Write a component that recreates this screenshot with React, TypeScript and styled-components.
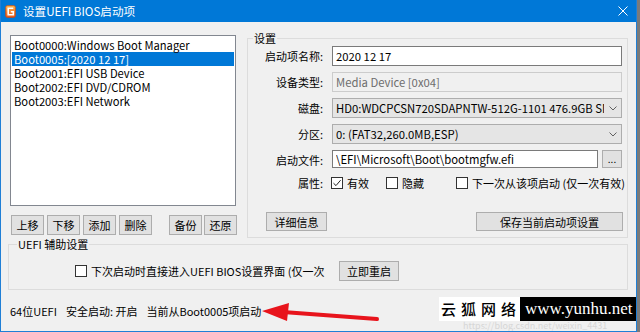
import React from 'react';
import styled, { createGlobalStyle } from 'styled-components';

const Global = createGlobalStyle`
  html, body { margin: 0; padding: 0; background: #7a7a7a; }
  body {
    font-family: "Noto Sans CJK SC", "Noto Sans", sans-serif;
    font-size: 11px;
    color: #000;
  }
  * { box-sizing: border-box; }
`;

const Window = styled.div`
  position: relative;
  width: 637px;
  height: 332px;
  background: #f0f0f0;
  border: 1px solid #1f7fd6;
  border-top: none;
  display: flex;
  flex-direction: column;
  overflow: hidden;
`;

const TitleBar = styled.div`
  height: 22px;
  flex: none;
  background: #0078d7;
  color: #fff;
  display: flex;
  align-items: center;
  padding-left: 4px;
  gap: 7px;
  font-size: 11.6px;
  line-height: 22px;
`;

const TitleText = styled.span`
  flex: 1;
`;

const CloseBtn = styled.div`
  width: 26px;
  height: 22px;
  display: flex;
  align-items: center;
  justify-content: center;
`;

const Content = styled.div`
  flex: 1;
  display: flex;
  flex-direction: column;
  padding: 13px 0 0 7px;
`;

const TopRow = styled.div`
  display: flex;
  padding-left: 2px;
  gap: 11px;
`;

const LeftCol = styled.div`
  width: 226px;
  display: flex;
  flex-direction: column;
  gap: 9px;
`;

const ListBox = styled.div`
  height: 171px;
  background: #fff;
  border: 1px solid #828790;
  padding: 2px 1px;
`;

const ListItem = styled.div<{ $sel?: boolean }>`
  height: 14px;
  line-height: 14px;
  padding-left: 2px;
  font-size: 11.2px;
  white-space: nowrap;
  background: ${p => (p.$sel ? '#0078d7' : 'transparent')};
  color: ${p => (p.$sel ? '#fff' : '#000')};
`;

const BtnRow = styled.div`
  display: flex;
  padding-left: 1px;
`;

const Btn = styled.button<{ $w?: number; $h?: number; $ml?: number }>`
  width: ${p => p.$w ?? 33}px;
  height: ${p => p.$h ?? 20}px;
  margin-left: ${p => p.$ml ?? 0}px;
  padding: 0;
  background: #e1e1e1;
  border: 1px solid #adadad;
  font-family: inherit;
  font-size: 11px;
  line-height: 16px;
  color: #000;
  flex: none;
`;

const Group = styled.div<{ $w: number; $h: number; $mt?: number }>`
  position: relative;
  width: ${p => p.$w}px;
  height: ${p => p.$h}px;
  margin-top: ${p => p.$mt ?? 0}px;
  border: 1px solid #dcdcdc;
  flex: none;
`;

const Legend = styled.span<{ $left: number }>`
  position: absolute;
  top: -8px;
  left: ${p => p.$left}px;
  padding: 0 1px;
  background: #f0f0f0;
  line-height: 14px;
  white-space: nowrap;
`;

const Form = styled.div`
  display: grid;
  grid-template-columns: 75px 290px;
  column-gap: 9px;
  row-gap: 6px;
  grid-auto-rows: 20px;
  padding-top: 7px;
`;

const Label = styled.div<{ $w?: number }>`
  text-align: right;
  line-height: 20px;
  white-space: nowrap;
  flex: none;
  width: ${p => (p.$w ? `${p.$w}px` : 'auto')};
`;

const Field = styled.div<{ $kind: 'edit' | 'disabled' | 'combo'; $h?: number }>`
  height: ${p => p.$h ?? 20}px;
  flex: 1;
  border: 1px solid
    ${p => (p.$kind === 'edit' ? '#7a7a7a' : p.$kind === 'disabled' ? '#cccccc' : '#adadad')};
  background: ${p => (p.$kind === 'edit' ? '#fff' : p.$kind === 'disabled' ? '#f0f0f0' : '#e5e5e5')};
  color: ${p => (p.$kind === 'disabled' ? '#6d6d6d' : '#000')};
  padding-left: 3px;
  font-size: 11.3px;
  white-space: nowrap;
  overflow: hidden;
  display: flex;
  align-items: center;
`;

const FieldText = styled.span`
  flex: 1;
  overflow: hidden;
  white-space: nowrap;
`;

const Chevron = styled.span`
  width: 17px;
  flex: none;
  display: flex;
  justify-content: center;
  align-items: center;
`;

const FileRow = styled.div`
  display: flex;
  gap: 4px;
  height: 18px;
`;

const DotBtn = styled.button`
  width: 20px;
  height: 18px;
  padding: 0;
  background: #e1e1e1;
  border: 1px solid #adadad;
  font-family: inherit;
  font-size: 10px;
  line-height: 12px;
  flex: none;
`;

const AttrRow = styled.div`
  display: flex;
  align-items: center;
  height: 14px;
  margin-top: 6px;
`;

const Check = styled.label<{ $ml?: number; $w?: number }>`
  display: flex;
  align-items: center;
  gap: 4px;
  margin-left: ${p => p.$ml ?? 0}px;
  width: ${p => (p.$w ? `${p.$w}px` : 'auto')};
  white-space: nowrap;
  line-height: 14px;
  flex: none;
`;

const Box = styled.span`
  width: 12px;
  height: 12px;
  border: 1px solid #333;
  background: #fff;
  display: inline-flex;
  align-items: center;
  justify-content: center;
  flex: none;
`;

const ActionRow = styled.div`
  display: flex;
  justify-content: space-between;
  padding: 0 4px 0 18px;
  margin-top: 22px;
`;

const UefiRow = styled.div`
  display: flex;
  align-items: center;
  padding: 16px 0 0 66px;
`;

const StatusBar = styled.div`
  display: flex;
  align-items: center;
  padding-left: 2px;
  margin-top: 13px;
  height: 16px;
  line-height: 16px;
  white-space: nowrap;
`;

const StatusItem = styled.span<{ $ml?: number }>`
  margin-left: ${p => p.$ml ?? 0}px;
`;

const Arrow = styled.svg`
  position: absolute;
  left: 258px;
  top: 300px;
`;

const Watermark = styled.div`
  position: absolute;
  left: 438px;
  top: 297px;
  display: flex;
  height: 24px;
`;

const WmLeft = styled.div`
  width: 81px;
  background: #fff;
  color: #000;
  font-size: 15px;
  font-weight: 500;
  line-height: 24px;
  padding-left: 2px;
  letter-spacing: 5px;
  white-space: nowrap;
  overflow: hidden;
`;

const WmRight = styled.div`
  width: 118px;
  background: #000;
  color: #fff;
  font-size: 17px;
  line-height: 24px;
  padding-left: 5px;
  white-space: nowrap;
  font-family: "Liberation Serif", "DejaVu Serif", serif;
`;

const FaintUrl = styled.div`
  position: absolute;
  left: 462px;
  top: 321px;
  font-size: 9px;
  line-height: 10px;
  color: #d6d6d6;
  white-space: nowrap;
`;

const CheckMark = () => (
  <svg width="10" height="10" viewBox="0 0 10 10">
    <path d="M1.5 5.2 L4 7.6 L8.6 2.2" fill="none" stroke="#222" strokeWidth="1" />
  </svg>
);

const ChevronIcon = () => (
  <svg width="8" height="5" viewBox="0 0 8 5">
    <path d="M0.5 0.5 L4 4 L7.5 0.5" fill="none" stroke="#606060" strokeWidth="1" />
  </svg>
);

const AppIcon = () => (
  <svg width="11" height="13" viewBox="0 0 11 13">
    <defs>
      <linearGradient id="ig" x1="0" y1="0" x2="0" y2="1">
        <stop offset="0" stopColor="#ffb347" />
        <stop offset="1" stopColor="#e8561c" />
      </linearGradient>
    </defs>
    <rect x="0.5" y="0.5" width="10" height="12" rx="2" fill="url(#ig)" stroke="#c9440f" strokeWidth="0.6" />
    <path d="M8.3 3.3 H3.2 V9.7 H8.3 V6.8 H5.8" fill="none" stroke="#fff" strokeWidth="1.6" />
  </svg>
);

const CloseIcon = () => (
  <svg width="10" height="10" viewBox="0 0 10 10">
    <path d="M0.5 0.5 L9.5 9.5 M9.5 0.5 L0.5 9.5" stroke="#fff" strokeWidth="1" />
  </svg>
);

const items = [
  'Boot0000:Windows Boot Manager',
  'Boot0005:[2020 12 17]',
  'Boot2001:EFI USB Device',
  'Boot2002:EFI DVD/CDROM',
  'Boot2003:EFI Network',
];

export default function App() {
  return (
    <>
      <Global />
      <Window>
        <TitleBar>
          <AppIcon />
          <TitleText>设置UEFI BIOS启动项</TitleText>
          <CloseBtn>
            <CloseIcon />
          </CloseBtn>
        </TitleBar>
        <Content>
          <TopRow>
            <LeftCol>
              <ListBox>
                {items.map((t, i) => (
                  <ListItem key={t} $sel={i === 1}>
                    {t}
                  </ListItem>
                ))}
              </ListBox>
              <BtnRow>
                <Btn>上移</Btn>
                <Btn $ml={3}>下移</Btn>
                <Btn $ml={3}>添加</Btn>
                <Btn $ml={3}>删除</Btn>
                <Btn $ml={17}>备份</Btn>
                <Btn $ml={2}>还原</Btn>
              </BtnRow>
            </LeftCol>
            <Group $w={381} $h={200} $mt={3}>
              <Legend $left={5}>设置</Legend>
              <Form>
                <Label>启动项名称:</Label>
                <Field $kind="edit">
                  <FieldText>2020 12 17</FieldText>
                </Field>
                <Label>设备类型:</Label>
                <Field $kind="disabled">
                  <FieldText>Media Device [0x04]</FieldText>
                </Field>
                <Label>磁盘:</Label>
                <Field $kind="combo">
                  <FieldText>HD0:WDCPCSN720SDAPNTW-512G-1101 476.9GB SN</FieldText>
                  <Chevron>
                    <ChevronIcon />
                  </Chevron>
                </Field>
                <Label>分区:</Label>
                <Field $kind="combo">
                  <FieldText>0: (FAT32,260.0MB,ESP)</FieldText>
                  <Chevron>
                    <ChevronIcon />
                  </Chevron>
                </Field>
                <Label>启动文件:</Label>
                <FileRow>
                  <Field $kind="edit" $h={18}>
                    <FieldText>\EFI\Microsoft\Boot\bootmgfw.efi</FieldText>
                  </Field>
                  <DotBtn>...</DotBtn>
                </FileRow>
              </Form>
              <AttrRow>
                <Label $w={75}>属性:</Label>
                <Check $ml={8} $w={55}>
                  <Box>
                    <CheckMark />
                  </Box>
                  有效
                </Check>
                <Check $w={70}>
                  <Box />
                  隐藏
                </Check>
                <Check>
                  <Box />
                  下一次从该项启动 (仅一次有效)
                </Check>
              </AttrRow>
              <ActionRow>
                <Btn $w={61} $h={19}>详细信息</Btn>
                <Btn $w={147} $h={19}>保存当前启动项设置</Btn>
              </ActionRow>
            </Group>
          </TopRow>
          <Group $w={620} $h={46} $mt={6}>
            <Legend $left={8}>UEFI 辅助设置</Legend>
            <UefiRow>
              <Check $w={264}>
                <Box />
                下次启动时直接进入UEFI BIOS设置界面 (仅一次
              </Check>
              <Btn $w={60}>立即重启</Btn>
            </UefiRow>
          </Group>
          <StatusBar>
            <StatusItem>64位UEFI</StatusItem>
            <StatusItem $ml={9}>安全启动: 开启</StatusItem>
            <StatusItem $ml={9}>当前从Boot0005项启动</StatusItem>
          </StatusBar>
        </Content>
        <Arrow width="122" height="26" viewBox="0 0 122 26">
          <path d="M118 19 L24 12" stroke="#e8141c" strokeWidth="4" strokeLinecap="round" />
          <path d="M3 11 L30 3 L28 21 Z" fill="#e8141c" />
        </Arrow>
        <FaintUrl>https://blog.csdn.net/weixin_4431</FaintUrl>
        <Watermark>
          <WmLeft>云狐网络</WmLeft>
          <WmRight>www.yunhu.net</WmRight>
        </Watermark>
      </Window>
    </>
  );
}
